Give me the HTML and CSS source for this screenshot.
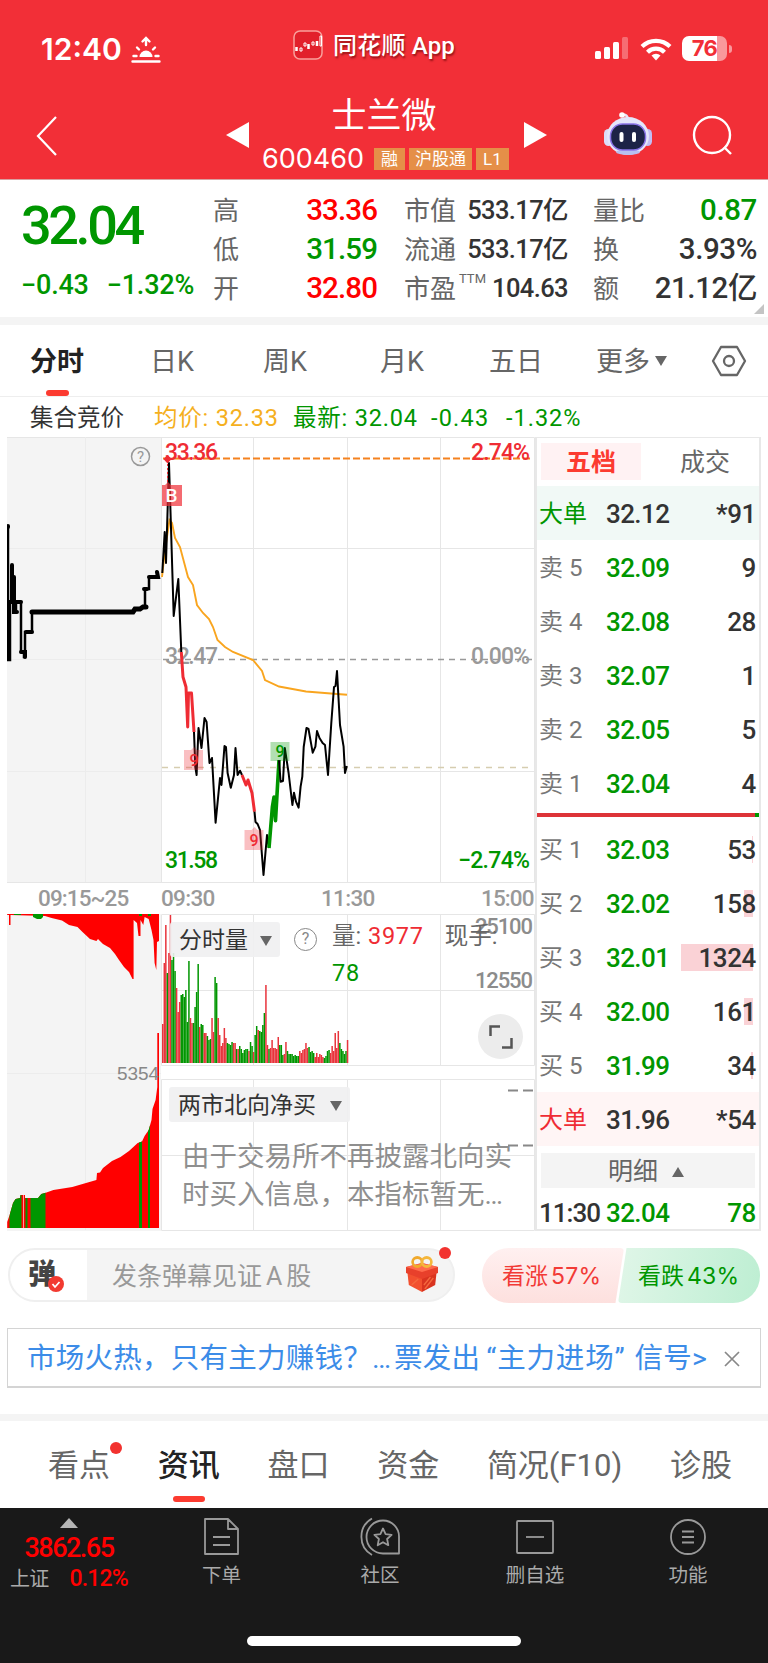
FILE: index.html
```
<!DOCTYPE html>
<html lang="zh-CN">
<head>
    <meta charset="UTF-8">
    <meta name="viewport" content="width=device-width, initial-scale=1.0">
    <title>士兰微 600460</title>
    <link rel="stylesheet" href="styles.css">
</head>
<body>
    <header class="header">
        <div class="status-bar">
            <div class="clock">12:40</div>
            <svg class="sunrise" width="30" height="28" viewBox="0 0 30 28" fill="none" stroke="#fff" stroke-width="2.4" stroke-linecap="round">
                <path d="M15 9V2.5M11.5 5.5L15 2l3.5 3.5M2.5 20h3M24.5 20h3M6 11.5l2 2M24 11.5l-2 2M1.5 25.5h27"/>
                <path d="M8.5 21a6.5 6.5 0 0 1 13 0z" fill="#fff" stroke="none"/>
            </svg>
            <svg class="app-logo" width="30" height="30" viewBox="0 0 30 30" fill="none" stroke="#fff">
                <rect x="1" y="1" width="28" height="28" rx="6" fill="#e2202b" stroke="#f9a09c" stroke-width="1.5"/>
                <path d="M3.5 17v4M15.500 14v5M24 11v5" stroke-width="2.5"/>
                <path d="M7 18h2v3h-2zM11 13h2v3h-2zM19 12h2v3h-2zM27 6h1.500v10h-1.500z"/>
            </svg>
            <div class="app-name">同花顺 App</div>
            <svg class="signal" width="34" height="23" viewBox="0 0 34 23" fill="#fff">
                <rect x="0" y="14" width="6" height="8" rx="1.5"/>
                <rect x="9" y="10" width="6" height="12" rx="1.5"/>
                <rect x="18" y="5" width="6" height="17" rx="1.5"/>
                <rect x="27" y="0" width="6" height="22" rx="1.5" opacity=".3"/>
            </svg>
            <svg class="wifi" width="32" height="24" viewBox="0 0 32 24" fill="none" stroke="#fff" stroke-width="4.2">
                <path d="M2 9.5a20 20 0 0 1 28 0M7.5 15.2a12 12 0 0 1 17 0"/>
                <path d="M16 23.5l-4.5-5a6.5 6.5 0 0 1 9 0z" fill="#fff" stroke="none"/>
            </svg>
            <div class="battery">76</div>
            <div class="battery-nub"></div>
        </div>
        <div class="title-bar">
            <svg class="back" width="22" height="40" viewBox="0 0 22 40" fill="none" stroke="#fff" stroke-width="2.2"><path d="M20 1L2 20l18 19"/></svg>
            <svg class="prev" width="23" height="26" viewBox="0 0 23 26" fill="#fff"><path d="M0 13L23 0v26z"/></svg>
            <div class="stock">
                <div class="stock-name">士兰微</div>
                <div class="stock-code"><b>600460</b><span>融</span><span>沪股通</span><span>L1</span></div>
            </div>
            <svg class="next" width="23" height="26" viewBox="0 0 23 26" fill="#fff"><path d="M23 13L0 0v26z"/></svg>
            <svg class="robot" width="48" height="46" viewBox="0 0 48 46">
                <path d="M24 8Q23 3 18 4" fill="none" stroke="#e8e6f8" stroke-width="2.5"/>
                <circle cx="18" cy="4" r="2.8" fill="#fff"/>
                <rect x="0" y="18" width="9" height="17" rx="4.5" fill="#dcdcf8"/>
                <rect x="39" y="18" width="9" height="17" rx="4.5" fill="#c2bdf4"/>
                <ellipse cx="24" cy="25" rx="21" ry="19" fill="#e4e6fb"/>
                <ellipse cx="24" cy="41" rx="12" ry="3" fill="#b8bff0"/>
                <rect x="6.5" y="13" width="35" height="26" rx="12" fill="#1d2347" stroke="#8a74e8" stroke-width="1.5"/>
                <rect x="15.5" y="21" width="4" height="10" rx="2" fill="#fff"/>
                <rect x="28" y="21" width="4" height="10" rx="2" fill="#fff"/>
            </svg>
            <svg class="search" width="42" height="42" viewBox="0 0 42 42" fill="none" stroke="#fff" stroke-width="2.4"><circle cx="20" cy="20" r="18"/><path d="M32 32l7 7"/></svg>
        </div>
    </header>

    <section class="quote">
        <div class="last">
            <div class="last-price">32.04</div>
            <div class="last-change"><span>−0.43</span><span>−1.32%</span></div>
        </div>
        <dl class="stats stats-a">
            <dt>高</dt><dd class="up">33.36</dd>
            <dt>低</dt><dd class="down">31.59</dd>
            <dt>开</dt><dd class="up">32.80</dd>
        </dl>
        <dl class="stats stats-b">
            <dt>市值</dt><dd>533.17亿</dd>
            <dt>流通</dt><dd>533.17亿</dd>
            <dt>市盈<sup>TTM</sup></dt><dd>104.63</dd>
        </dl>
        <dl class="stats stats-c">
            <dt>量比</dt><dd class="down">0.87</dd>
            <dt>换</dt><dd>3.93%</dd>
            <dt>额</dt><dd>21.12亿</dd>
        </dl>
        <i class="corner"></i>
    </section>

    <nav class="period-tabs">
        <a class="active">分时</a>
        <a>日K</a>
        <a>周K</a>
        <a>月K</a>
        <a>五日</a>
        <a>更多<i class="caret"></i></a>
        <svg width="36" height="32" viewBox="0 0 36 32" fill="none" stroke="#666" stroke-width="2.3"><path d="M10 2h16l8 14-8 14H10L2 16z" stroke-linejoin="round"/><circle cx="18" cy="16" r="5"/></svg>
    </nav>

    <div class="legend">
        <span class="legend-name">集合竞价</span>
        <span class="legend-avg">均价: 32.33</span>
        <span class="legend-last">最新: 32.04</span>
        <span class="legend-diff">-0.43</span>
        <span class="legend-pct">-1.32%</span>
    </div>

    <main class="board">
        <div class="charts">
            <svg class="price-chart" width="528" height="446" viewBox="7 437 528 446">
                <rect x="7" y="437" width="154" height="445" fill="#f4f4f4"/>
                <g class="grid">
                    <path d="M7 437.5H534.5V882.5H7M161.5 437V882M253.5 437V882M347.5 437V882M440.5 437V882"/>
                    <path d="M161 548.5H534M161 771.5H534"/>
                    <path d="M7 548.5H161M7 659.5H161M7 771.5H161M85.5 437V882" stroke="#ececec"/>
                </g>
                <!-- high / previous close / last price guides -->
                <path d="M163 458.5H533" stroke="#f5821f" stroke-width="1.8" stroke-dasharray="7 3"/>
                <path d="M163 659.5H533" stroke="#999" stroke-width="1.3" stroke-dasharray="6 5"/>
                <path d="M162 767.5H534" stroke="#d6cdb0" stroke-width="1.5" stroke-dasharray="6 6"/>
                <g class="axis-text">
                    <text x="165" y="460" textLength="53" fill="#ef2c34">33.36</text>
                    <text x="471" y="460" textLength="59" fill="#ef2c34">2.74%</text>
                    <text x="165" y="664" textLength="53" fill="#999">32.47</text>
                    <text x="471" y="664" textLength="59" fill="#999">0.00%</text>
                    <text x="165" y="868" textLength="53" fill="#009600">31.58</text>
                    <text x="458" y="868" textLength="72" fill="#009600">−2.74%</text>
                </g>
                <!-- call auction -->
                <path class="auction" d="M8 526V660H10V602H12V565V602H14V577V612H16V602H21V652H24V657H25V632H32V612"/>
                <path d="M32 612H133L135 609H140L143 607H146" class="auction thick"/>
                <path d="M145 607V589H149V577" class="auction"/>
                <path d="M144 589h3M149 577h9l-1-5M21 652h4v5M26 632h6M10 602h11M14 577v35h3M12 565v37M8.500 602v57M8 526v1" class="auction thick small"/>
                <circle cx="140.5" cy="456.5" r="9" fill="none" stroke="#999" stroke-width="1.5"/>
                <text x="140.5" y="462" class="help">?</text>
                <!-- average -->
                <path d="M162 577L165 550L169.5 520L172 523L175 538L180 547L188 577L193 585L197 605L203 613L209 619L213 627L217.5 640L225 647L233 652L253 660L262 671L265 680L279 686.5L306 691.5L334 693.7L347 694.7" class="avg"/>
                <!-- intraday price -->
                <path class="line" d="M162.3 573L164.7 532L166 563L169 463L173.7 616L178.3 579L181.3 652"/>
                <path class="line line-red" d="M181.3 652L183 677L186 687L187.7 727L188.5 693H191.5L194 732"/>
                <path class="line" d="M194 732L195.3 767L196.6 775L198.5 728L201.5 748L204.5 718L206.6 722L209.5 763L212 758L215.6 822.7L220 778L221.5 785L224.5 746L226 747L227.6 773L230.8 787.7L234 775L235.5 748L237.6 775L240 770.7L242 775"/>
                <path class="line line-red" d="M242 775L246 785L248 780L252 793L254.5 811.7"/>
                <path class="line" d="M254.5 811.7L255.5 822L257.6 824L260 830L263.5 875L267 835L269 848"/>
                <path class="line line-green" d="M269 848L272.4 806.7L274 797L275.5 820.7L279 760"/>
                <path class="line" d="M279 760L280.6 781.7L283 781L284.8 748L288.6 773L292.4 805L294 792.7L296 801.7L298.6 807.7L300.6 786.7L302.3 776.7L303.7 747L306.5 728L308.5 729L312.7 752.7L315.4 746.7L317 731L319.5 738L322.6 743L325 745L328 775L331.3 723L334 687L335.5 686L337 671L340 725L343.6 746.7L345 773L346.8 766"/>
                <!-- markers -->
                <path d="M167.5 455l4 4-4 4.5-4-4.5z" fill="#ef2c34"/>
                <path d="M167.5 464V484" stroke="#ef2c34" stroke-dasharray="2 2"/>
                <path d="M162 485h3l3-3 3 3h11v21h-20z" fill="#ef2c34" opacity=".7"/>
                <text x="171.5" y="502" class="mark mark-buy" fill="#fff">B</text>
                <path d="M184 750h7l3-3 3 3h6v20h-19zM244.5 830h7l3-3 3 3h6v20h-19z" fill="#ef2c34" opacity=".3"/>
                <path d="M270.5 742h19v19h-19z" fill="#009600" opacity=".3"/>
                <text x="194" y="766" class="mark" fill="#ef2c34">9</text>
                <text x="254" y="846" class="mark" fill="#ef2c34">9</text>
                <text x="280" y="757" class="mark" fill="#009600">9</text>
            </svg>

            <div class="time-axis"><span>09:15~25</span><span>09:30</span><span>11:30</span><span>15:00</span></div>

            <div class="lower">
                <svg class="auction-volume" width="154" height="317" viewBox="7 914 154 317">
                    <rect x="7" y="914" width="154" height="317" fill="#f4f4f4"/>
                    <path d="M85.5 914V1230M7 1073.5H161" stroke="#ececec"/>
                    <path fill="#ff0000" d="M7.2 914H159V941L157 942L156.3 970L154.6 963L153.5 940L151.5 930L148.7 919L144.6 917L143.3 925L140.5 920V936H138.5L137 923L133.6 920V979H132.5L129 972L124 967L119 960L115 954L110 948L103 944L98 939L96.4 941L90 939L82.5 932L77.5 927L69 925L62 920.5L51.6 918L45 916L10.5 915V925H9V915H7.2z"/>
                    <path fill="#009600" d="M33 914h10v3l-2 2h-4l-4-2zM139 914h3v2h-3zM148 914h3v2h-3zM14 914h7v1h-7z"/>
                    <clipPath id="bid"><path d="M7.2 1228V1222L9.6 1215L13 1203L15.5 1199L20 1198L20.5 1195H25V1198H38L41.3 1194L46.5 1192.5L53.4 1190L72.3 1187L86 1183L96.4 1180L97 1173L100 1172.5L103 1168L112 1161L120.5 1157L129 1151L137.7 1143L142 1141.5L144.6 1136L148.7 1130L151.5 1120L152.5 1109L155.6 1100L157.3 1087V1033H159V1228z"/></clipPath>
                    <g clip-path="url(#bid)">
                        <rect x="7" y="1030" width="153" height="198" fill="#ff0000"/>
                        <path fill="#009600" d="M9.5 1030h12v198h-12zM25.500 1030h2v198h-2zM30.5 1030h15v198h-15zM139 1030h3v198h-3zM148 1030h2v198h-2z"/>
                        <path d="M23.5 1190V1228" stroke="#fff" opacity=".6"/>
                    </g>
                    <text x="117" y="1080" textLength="42" font-family="Liberation Sans" font-size="19" fill="#888">5354</text>
                </svg>
                <div class="panels">
                    <div class="panel">
                        <svg width="374" height="152" viewBox="161 914 374 152">
                            <path class="grid" d="M161.5 914.5H534.5V1065.5H161.5zM253.5 914V1065M347.5 914V1065M440.5 914V1065M161 990.5H534"/>
                            <g id="volumeBars"></g>
                            <g class="axis-text volume-text">
                                <text x="475" y="934" textLength="58">25100</text>
                                <text x="475" y="988" textLength="58">12550</text>
                            </g>
                        </svg>
                        <div class="panel-head">
                            <div class="picker">分时量<i class="caret"></i></div>
                            <div class="help-icon">?</div>
                            <div class="readout">量: <em class="rise">3977</em><span>现手:</span><br><em class="down">78</em></div>
                        </div>
                        <div class="expand">
                            <svg width="24" height="24" viewBox="0 0 24 24" fill="none" stroke="#555" stroke-width="2.5"><path d="M1.5 11V1.5H11M13 22.5h9.5V13"/></svg>
                        </div>
                    </div>
                    <div class="panel">
                        <svg width="374" height="152" viewBox="161 1079 374 152">
                            <path class="grid" d="M161.5 1079.5H534.5V1230.5H161.5zM253.5 1079V1230M347.5 1079V1230M440.5 1079V1230M161 1155.5H534"/>
                            <path d="M508 1090.5h10M523 1090.5h10M508 1145.5h10M523 1145.5h10" stroke="#888" stroke-width="2"/>
                        </svg>
                        <div class="panel-body">
                            <div class="picker">两市北向净买<i class="caret"></i></div>
                            <p>由于交易所不再披露北向实<br>时买入信息，本指标暂无…</p>
                        </div>
                    </div>
                </div>
            </div>
        </div>

        <aside class="book">
            <div class="book-tabs"><b>五档</b><span>成交</span></div>
            <div class="row big-sell"><span class="down">大单</span><b>32.12</b><em>*91</em></div>
            <div class="row"><span>卖 5</span><b class="down">32.09</b><em>9</em></div>
            <div class="row"><span>卖 4</span><b class="down">32.08</b><em>28</em></div>
            <div class="row"><span>卖 3</span><b class="down">32.07</b><em>1</em></div>
            <div class="row"><span>卖 2</span><b class="down">32.05</b><em>5</em></div>
            <div class="row"><span>卖 1</span><b class="down">32.04</b><em>4</em></div>
            <div class="ratio"></div>
            <div class="row"><span>买 1</span><b class="down">32.03</b><em><i style="width: 1px"></i>53</em></div>
            <div class="row"><span>买 2</span><b class="down">32.02</b><em><i style="width: 9px"></i>158</em></div>
            <div class="row"><span>买 3</span><b class="down">32.01</b><em><i style="width: 72px"></i>1324</em></div>
            <div class="row"><span>买 4</span><b class="down">32.00</b><em><i style="width: 9px"></i>161</em></div>
            <div class="row"><span>买 5</span><b class="down">31.99</b><em><i style="width: 2px"></i>34</em></div>
            <div class="row big-buy"><span class="rise">大单</span><b>31.96</b><em>*54</em></div>
            <div class="detail">明细<i class="caret-up"></i></div>
            <div class="row tick"><b>11:30</b><b class="down">32.04</b><em class="down">78</em></div>
        </aside>
    </main>

    <div class="social">
        <div class="danmu">
            <div class="danmu-icon">弹
                <svg width="16" height="16" viewBox="0 0 16 16"><circle cx="8" cy="8" r="8" fill="#f23a30"/><path d="M4.5 8l2.5 3 4.5-5" fill="none" stroke="#fff" stroke-width="1.8"/></svg>
            </div>
            <div class="danmu-input">发条弹幕见证<span>A</span>股</div>
            <svg class="gift" width="32" height="36" viewBox="0 0 34 36" preserveAspectRatio="none">
                <path d="M1 12l2 17 14 7V15z" fill="#f2502f"/>
                <path d="M33 12l-2 17-14 7V15z" fill="#d93420"/>
                <path d="M0 11l17-4 17 4v6l-17 6-17-6z" fill="#e8402b"/>
                <path d="M0 11l17-4 17 4-17 5z" fill="#ff6a4c"/>
                <path d="M20 33l9-11M19 29l7-8M6 29l7-6" stroke="#f4683e" stroke-width="1.5"/>
                <ellipse cx="12" cy="6" rx="5" ry="4.5" fill="none" stroke="#f0a92c" stroke-width="2.8"/>
                <ellipse cx="22" cy="6" rx="5" ry="4.5" fill="none" stroke="#f5b73c" stroke-width="2.8"/>
            </svg>
            <i class="dot"></i>
        </div>
        <div class="poll">
            <div class="bull">看涨<span>57%</span></div>
            <div class="bear">看跌<span>43%</span></div>
        </div>
    </div>

    <div class="promo">
        <a>市场火热，只有主力赚钱？<span>…</span>票发出<q>主力进场</q>信号&gt;</a>
        <svg width="16" height="16" viewBox="0 0 16 16" stroke="#888" stroke-width="1.7"><path d="M1 1l14 14M15 1L1 15"/></svg>
    </div>

    <nav class="info-tabs">
        <a>看点<i class="dot"></i></a>
        <a class="active">资讯</a>
        <a>盘口</a>
        <a>资金</a>
        <a>简况(F10)</a>
        <a>诊股</a>
    </nav>

    <footer class="bottom">
        <div class="toolbar">
            <div class="index">
                <i class="caret-up"></i>
                <strong>3862.65</strong>
                <div><span>上证</span><b>0.12%</b></div>
            </div>
            <div class="tool">
                <svg width="42" height="40" viewBox="0 0 42 40"><path d="M4 2h23l10 10v25H4zM27 2v10h10M12 20h17M12 28h17"/></svg>
                下单
            </div>
            <div class="tool">
                <svg width="42" height="40" viewBox="0 0 42 40"><path d="M24 3.5a16 16 0 0 0 0 33H40V20A16 16 0 0 0 24 3.5z"/><path d="M13 1.5A21 21 0 0 0 13 38M24 11.5l2.6 5.6 6 .7-4.5 4.2 1.2 6.2-5.3-3-5.3 3 1.2-6.2-4.5-4.2 6-.7z"/></svg>
                社区
            </div>
            <div class="tool">
                <svg width="42" height="40" viewBox="0 0 42 40"><rect x="3" y="4" width="36" height="32" rx="1"/><path d="M12 20h18"/></svg>
                删自选
            </div>
            <div class="tool">
                <svg width="42" height="40" viewBox="0 0 42 40"><circle cx="21" cy="20" r="17"/><path d="M15 14.5h12M15 20h12M15 25.5h12"/></svg>
                功能
            </div>
        </div>
        <div class="home-bar"></div>
    </footer>

    <script>
        // one bar per minute from 09:30, negative = falling minute
        var volumes = [39, 100, 138, -90, 110, 148, -103, -110, -92, 75, 51, 61, -68, -69, -66, -73, -41, -102, 45, 40,
            -40, -56, -71, -99, 36, -39, -38, 30, 30, -27, -23, -24, 45, 31, -86, -80, 45, 28, 17, 20,
            35, 25, -20, -19, -18, -21, 20, 20, -14, 14, -17, -14, -10, -13, -14, -14, 12, -21, -17, 11,
            -28, -37, 33, -32, -31, -38, -50, 78, 18, -14, 15, 23, 15, 15, 14, 26, -18, -18, -8, 9,
            21, -12, -9, -9, -9, -7, -8, -7, -7, 12, 10, 13, 14, 20, 15, -16, -11, -12, -10, 6,
            10, 6, 9, 8, 6, -5, -7, -12, -13, 10, 17, 12, 30, 15, 32, -20, -14, -12, -9, -12, 23];
        var bars = '';
        for (var i = 0; i < volumes.length; i++) {
            var h = Math.abs(volumes[i]);
            bars += '<rect x="' + (162 + i * 1.54).toFixed(2) + '" y="' + (1063 - h) + '" width="1.5" height="' + h +
                '" fill="' + (volumes[i] > 0 ? '#e8343c' : '#009600') + '"/>';
        }
        document.getElementById('volumeBars').innerHTML = bars;
    </script>
</body>
</html>
```
FILE: styles.css
```
* {
    box-sizing: border-box;
}
body {
    margin: 0;
    width: 768px;
    background: #fff;
    color: #333;
    font-family: Roboto, "Noto Sans CJK SC", sans-serif;
    font-size: 24px;
    line-height: 1;
}
svg {
    display: block;
    flex: none;
}
i, em {
    font-style: normal;
}
.up {
    color: #ff0000;
}
.rise {
    color: #ef2c34;
}
.down {
    color: #009600 !important;
}
.caret, .caret-up {
    display: inline-block;
    border: 6px solid transparent;
    border-top: 10px solid #666;
    border-bottom: 0;
}
.caret-up {
    border-top: 0;
    border-bottom: 10px solid #666;
}
.dot {
    position: absolute;
    width: 12px;
    height: 12px;
    border-radius: 50%;
    background: #f2322f;
}

/* header */
.header {
    height: 180px;
    background: #f22f37;
    border-bottom: 1px solid #d9a0a0;
    color: #fff;
}
.status-bar {
    height: 92px;
    padding: 5px 0 0 41px;
    display: flex;
    align-items: center;
}
.clock {
    width: 90px;
    font: 600 30px/1 Inter, sans-serif;
}
.sunrise {
    margin-top: 3px;
}
.app-logo {
    margin-left: 132px;
    margin-top: -7px;
}
.app-name {
    margin: -5px 0 0 10px;
    width: 262px;
    font-size: 24px;
    font-weight: 500;
    letter-spacing: 0.2px;
    white-space: nowrap;
    text-shadow: 1px 2px 2px rgba(90, 0, 0, .6);
}
.wifi {
    margin: 0 10px 0 11px;
}
.battery {
    width: 45px;
    height: 25px;
    border-radius: 7px;
    background: linear-gradient(90deg, #fff 77%, #f9989c 77%);
    color: #f22f37;
    font: 700 22px/25px Inter, sans-serif;
    letter-spacing: -0.5px;
    text-align: center;
}
.battery-nub {
    width: 3px;
    height: 8px;
    margin-left: 2px;
    border-radius: 0 4px 4px 0;
    background: #f9989c;
}
.title-bar {
    display: flex;
    padding-left: 36px;
    height: 87px;
}
.back {
    margin-top: 24px;
}
.prev {
    margin: 30px 0 0 168px;
}
.stock {
    width: 275px;
    padding-left: 13px;
}
.stock-name {
    height: 51px;
    font-size: 35px;
    line-height: 50px;
    text-align: center;
    padding-right: 18px;
}
.stock-code {
    display: flex;
    height: 31px;
    align-items: center;
    gap: 4px;
}
.stock-code b {
    font: 400 27px/1 Inter, sans-serif;
    width: 108px;
}
.stock-code span {
    padding: 0 7px;
    height: 22px;
    line-height: 23px;
    font-size: 17px;
    background: #e58f48;
    white-space: nowrap;
}
.stock-code span:nth-child(3) {
    padding: 0 6px;
}
.next {
    margin-top: 30px;
}
.robot {
    margin: 19px 0 0 57px;
}
.search {
    margin: 23px 0 0 40px;
}

/* quote */
.quote {
    position: relative;
    display: flex;
    height: 145px;
    border-bottom: 8px solid #f4f4f4;
}
.last {
    width: 213px;
    padding: 18px 0 0 21px;
    color: #009600;
}
.last-price {
    font-size: 54px;
    font-weight: 500;
    line-height: 56px;
    letter-spacing: -3.4px;
}
.last-change {
    display: flex;
    gap: 18px;
    margin-top: 18px;
    font-size: 27px;
    font-weight: 500;
    letter-spacing: -0.2px;
}
.stats {
    display: grid;
    grid-template-columns: 56px 1fr;
    grid-template-rows: repeat(3, 39.3px);
    align-items: center;
    margin: 11px 0 0;
    width: 164px;
}
.stats-b {
    margin-left: 27px;
}
.stats-c {
    margin-left: 25px;
    width: 164px;
}
.stats dt {
    font-size: 26px;
    color: #666;
    white-space: nowrap;
}
.stats dd {
    margin: 0;
    font-size: 29.5px;
    font-weight: 500;
    letter-spacing: -0.9px;
    text-align: right;
    white-space: nowrap;
}
.stats-b dd {
    font-size: 25.5px;
    letter-spacing: -0.6px;
}
.stats-c dd {
    letter-spacing: -0.4px;
}
.stats sup {
    font-size: 13px;
    line-height: 0;
    margin-left: 3px;
    vertical-align: 15px;
}
.corner {
    position: absolute;
    right: 4px;
    bottom: 3px;
    border: 5px solid #c4c4c4;
    border-top-color: transparent;
    border-left-color: transparent;
}

/* period tabs */
.period-tabs {
    display: flex;
    height: 72px;
    padding-left: 30px;
    border-bottom: 1px solid #eee;
    font-size: 27px;
    line-height: 74px;
    color: #666;
}
.period-tabs a {
    position: relative;
    width: 113px;
    padding-left: 1px;
    white-space: nowrap;
}
.period-tabs a:first-child {
    width: 119px;
    padding-left: 0;
}
.period-tabs a:nth-child(3) {
    width: 117px;
}
.period-tabs a:nth-child(4) {
    width: 109px;
}
.period-tabs a:nth-child(5) {
    width: 107px;
}
.period-tabs a:nth-child(6) {
    width: 117px;
}
.period-tabs .active {
    color: #222;
    font-weight: 700;
}
.active::after {
    content: "";
    position: absolute;
    left: 16px;
    bottom: 0;
    width: 23px;
    height: 6px;
    border-radius: 3px;
    background: #fc3b30;
}
.period-tabs .caret {
    margin-left: 5px;
    vertical-align: 5px;
}
.period-tabs svg {
    margin-top: 20px;
    margin-left: -1px;
}

.legend {
    display: flex;
    height: 40px;
    padding: 4px 0 0 30px;
    align-items: center;
    font-size: 23.5px;
    letter-spacing: 0.2px;
    color: #009600;
    white-space: nowrap;
}
.legend-name {
    width: 124px;
    letter-spacing: 0;
    color: #333;
}
.legend-avg {
    width: 139px;
    letter-spacing: 0.8px;
    color: #f5b01e;
}
.legend-last {
    width: 138px;
    letter-spacing: 0.8px;
}
.legend-diff {
    width: 75px;
    letter-spacing: 1.2px;
}
.legend-pct {
    letter-spacing: 1px;
}

/* charts */
.board {
    display: flex;
    height: 794px;
    padding-left: 7px;
}
.charts {
    width: 528px;
}
.grid {
    fill: none;
    stroke: #e6e6e6;
}
.axis-text {
    font-size: 23px;
    font-weight: 500;
}
.volume-text {
    font-size: 22px;
    fill: #8c8c8c;
}
.auction {
    fill: none;
    stroke: #000;
    stroke-width: 2.5;
}
.thick {
    stroke-width: 5;
    stroke-linecap: round;
}
.small {
    stroke-width: 4;
}
.help {
    font-size: 15px;
    fill: #999;
    text-anchor: middle;
}
.avg {
    fill: none;
    stroke: #f9a51f;
    stroke-width: 1.9;
}
.line {
    fill: none;
    stroke: #000;
    stroke-width: 2;
    stroke-linejoin: round;
}
.line-red {
    stroke: #ef2c34;
    stroke-width: 3;
}
.line-green {
    stroke: #009600;
    stroke-width: 3.6;
}
.mark {
    font-size: 16px;
    font-weight: 500;
    text-anchor: middle;
}
.mark-buy {
    font-size: 19px;
}
.time-axis {
    display: flex;
    height: 31px;
    align-items: center;
    font-size: 22.5px;
    font-weight: 500;
    letter-spacing: -0.7px;
    color: #999;
    white-space: nowrap;
}
.time-axis span {
    width: 160px;
}
.time-axis span:first-child {
    width: 154px;
    padding-left: 31px;
    letter-spacing: -0.9px;
}
.time-axis span:last-child {
    width: 52px;
    letter-spacing: -0.9px;
}
.lower {
    display: flex;
}
.panels {
    display: flex;
    flex-direction: column;
    gap: 13px;
}
.panel {
    position: relative;
}
.panel-head {
    position: absolute;
    left: 9px;
    top: 8px;
    display: flex;
}
.picker {
    display: flex;
    align-items: center;
    justify-content: space-between;
    width: 110px;
    height: 35px;
    padding: 2px 8px 0 9px;
    border-radius: 3px;
    background: rgba(240, 239, 241, .9);
    font-size: 23px;
    white-space: nowrap;
}
.help-icon {
    width: 23px;
    height: 23px;
    margin: 6px 15px 0 14px;
    border: 1.5px solid #888;
    border-radius: 50%;
    font-size: 16px;
    line-height: 20px;
    text-align: center;
    color: #888;
}
.readout {
    margin-top: -4px;
    font-size: 23.5px;
    line-height: 37px;
    color: #666;
    white-space: nowrap;
}
.readout em {
    margin-left: 1px;
    letter-spacing: 0.7px;
}
.readout br + em {
    margin-left: 0;
}
.readout span {
    margin-left: 21px;
}
.expand {
    position: absolute;
    right: 12px;
    top: 100px;
    width: 45px;
    height: 45px;
    display: grid;
    place-items: center;
    border-radius: 50%;
    background: #ececec;
}
.panel-body {
    position: absolute;
    left: 8px;
    top: 8px;
}
.panel-body .picker {
    width: 181px;
}
.panel-body p {
    margin: 16px 0 0 13px;
    font-size: 27.5px;
    line-height: 38px;
    color: #8f8f8f;
    white-space: nowrap;
}

/* order book */
.book {
    width: 226px;
    border: solid #e8e8e8;
    border-width: 1px 2px 2px;
}
.book-tabs {
    display: flex;
    height: 48px;
    padding: 5px 0 0 4px;
    line-height: 39px;
    text-align: center;
    font-size: 25px;
    color: #666;
}
.book-tabs b {
    width: 100px;
    height: 37px;
    background: #fff2f3;
    color: #fc3b30;
}
.book-tabs span {
    flex: 1;
    padding-left: 10px;
}
.row {
    display: flex;
    height: 54px;
    padding: 1px 3px 0 2px;
    align-items: center;
    white-space: nowrap;
}
.row span {
    width: 67px;
    font-size: 24px;
    color: #777;
}
.row .rise {
    color: #ef2c34;
}
.row b {
    font-size: 26px;
    font-weight: 500;
    letter-spacing: -0.6px;
}
.row em {
    position: relative;
    flex: 1;
    font-size: 26px;
    font-weight: 500;
    letter-spacing: -0.4px;
    text-align: right;
}
.row em i {
    position: absolute;
    right: 3px;
    top: -1px;
    height: 27px;
    background: #fad2d6;
    z-index: -1;
}
.big-sell {
    background: #f1f9f6;
}
.big-buy {
    background: #fff5f5;
}
.ratio {
    height: 4px;
    margin: 3px 0 5px;
    background: linear-gradient(90deg, #dd3338 98%, #009600 98%);
}
.detail {
    display: flex;
    height: 35px;
    margin: 7px 4px 0;
    padding: 2px 4px 0 0;
    align-items: center;
    justify-content: center;
    gap: 14px;
    background: #f4f4f4;
    font-size: 25px;
    color: #666;
}
.tick {
    height: 47px;
    padding-top: 3px;
}
.tick b:first-child {
    width: 67px;
    letter-spacing: -1px;
}

/* comments and poll */
.social {
    display: flex;
    height: 97px;
    padding: 17px 8px 0;
    justify-content: space-between;
}
.danmu {
    position: relative;
    display: flex;
    width: 447px;
    height: 54px;
    border: 2px solid #efefef;
    border-radius: 27px;
    background: #f4f4f4;
    align-items: center;
}
.danmu-icon {
    position: relative;
    width: 77px;
    height: 50px;
    padding-left: 18px;
    border-radius: 25px 0 0 25px;
    background: #fff;
    font-size: 28px;
    font-weight: 900;
    line-height: 49px;
    color: #444;
}
.danmu-icon svg {
    position: absolute;
    left: 38px;
    top: 26px;
}
.danmu-input {
    width: 310px;
    padding: 2px 0 0 25px;
    font-size: 25px;
    color: #999;
}
.danmu-input span {
    margin: 0 4px;
}
.gift {
    margin: -2px 0 0 9px;
}
.danmu .dot {
    right: 2px;
    top: -3px;
}
.poll {
    display: flex;
    width: 278px;
    font-size: 23px;
    line-height: 56px;
}
.poll span {
    margin-left: 3px;
    font-family: Inter, sans-serif;
    letter-spacing: 0.2px;
}
.bull {
    width: 142px;
    height: 55px;
    padding-left: 20px;
    border-radius: 27px 4px 4px 27px;
    background: linear-gradient(#fff0f0, #fde0de);
    clip-path: polygon(0 0, 100% 0, 94% 100%, 0 100%);
    color: #f23a36;
}
.bear {
    width: 142px;
    height: 55px;
    margin-left: -6px;
    padding-left: 20px;
    border-radius: 4px 27px 27px 4px;
    background: linear-gradient(100deg, #e0f6e8, #bdeed2);
    clip-path: polygon(6% 0, 100% 0, 100% 100%, 0 100%);
    color: #009600;
}

.promo {
    display: flex;
    width: 754px;
    height: 60px;
    margin: 0 7px 26px;
    padding: 3px 20px 0 19px;
    align-items: center;
    justify-content: space-between;
    border: 1px solid #d4d4d4;
    border-bottom-width: 2px;
    font-size: 28.5px;
    letter-spacing: 0.25px;
    color: #3c8ce8;
    white-space: nowrap;
}
.promo span {
    letter-spacing: 3px;
}
.promo q {
    quotes: "“" "”";
    margin: 0 9px 0 6px;
    letter-spacing: 0.8px;
}

/* info tabs */
.info-tabs {
    display: flex;
    height: 94px;
    padding: 0 36px 0 48px;
    justify-content: space-between;
    border-top: 7px solid #f4f4f4;
    font-size: 31px;
    line-height: 90px;
    color: #666;
}
.info-tabs a {
    position: relative;
}
.info-tabs .active {
    color: #222;
    font-weight: 500;
}
.info-tabs .active::after {
    left: 15px;
    width: 32px;
    bottom: 6px;
}
.info-tabs .dot {
    right: -12px;
    top: 21px;
}

/* bottom bar */
.bottom {
    height: 155px;
    background: #191919;
    color: #aaa;
}
.toolbar {
    display: flex;
    height: 128px;
}
.index {
    width: 138px;
    padding-top: 10px;
    text-align: center;
    color: #ff0000;
}
.index .caret-up {
    display: block;
    width: 18px;
    margin: 0 auto;
    border-width: 0 9px 10px;
    border-bottom-color: #b5b5b5;
}
.index strong {
    display: block;
    margin-top: 7px;
    font-size: 27px;
    font-weight: 500;
    letter-spacing: -1.5px;
}
.index div {
    display: flex;
    margin-top: 5px;
    padding-left: 10px;
    align-items: center;
    gap: 21px;
    font-size: 23px;
    letter-spacing: -0.8px;
}
.index b {
    font-weight: 500;
}
.index span {
    font-size: 20px;
    color: #aaa;
}
.tool {
    display: flex;
    width: 146px;
    padding-top: 9px;
    flex-direction: column;
    align-items: center;
    gap: 9px;
    font-size: 19.5px;
}
.tool:nth-child(2) {
    width: 167px;
}
.tool:nth-child(3) {
    width: 150px;
}
.tool:nth-child(4) {
    width: 160px;
}
.tool svg {
    fill: none;
    stroke: #999;
    stroke-width: 1.8;
    stroke-linejoin: round;
}
.home-bar {
    width: 274px;
    height: 10px;
    margin: 0 auto;
    border-radius: 5px;
    background: #fff;
}
```
